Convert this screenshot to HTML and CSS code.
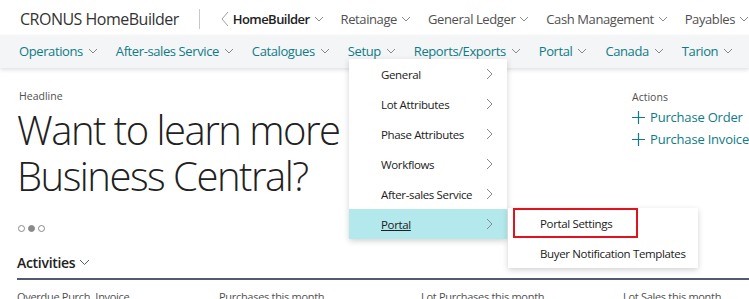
FILE: index.html
```html
<!DOCTYPE html>
<html lang="en">
<head>
    <meta charset="UTF-8">
    <meta name="viewport" content="width=device-width, initial-scale=1.0">
    <title>CRONUS HomeBuilder</title>
    <link rel="stylesheet" href="styles.css">
</head>
<body>
    <header class="top-bar">
        <div class="brand">CRONUS HomeBuilder</div>
        <div class="separator"></div>
        <nav class="role-nav">
            <span class="back">
                <svg width="8" height="16" viewBox="0 0 8 16"><path d="M7 1 L1 8 L7 15" fill="none" stroke="#a0a0a0" stroke-width="1"/></svg>
            </span>
            <a class="role-item current">HomeBuilder<svg class="chev" width="10" height="6" viewBox="0 0 10 6"><path d="M1 1 L5 5 L9 1" fill="none" stroke="#8a8a8a" stroke-width="1"/></svg></a>
            <a class="role-item">Retainage<svg class="chev" width="10" height="6" viewBox="0 0 10 6"><path d="M1 1 L5 5 L9 1" fill="none" stroke="#8a8a8a" stroke-width="1"/></svg></a>
            <a class="role-item">General Ledger<svg class="chev" width="10" height="6" viewBox="0 0 10 6"><path d="M1 1 L5 5 L9 1" fill="none" stroke="#8a8a8a" stroke-width="1"/></svg></a>
            <a class="role-item">Cash Management<svg class="chev" width="10" height="6" viewBox="0 0 10 6"><path d="M1 1 L5 5 L9 1" fill="none" stroke="#8a8a8a" stroke-width="1"/></svg></a>
            <a class="role-item">Payables<svg class="chev" width="10" height="6" viewBox="0 0 10 6"><path d="M1 1 L5 5 L9 1" fill="none" stroke="#8a8a8a" stroke-width="1"/></svg></a>
        </nav>
    </header>

    <nav class="main-nav">
        <a class="nav-item">Operations<svg class="chev" width="10" height="6" viewBox="0 0 10 6"><path d="M1 1 L5 5 L9 1" fill="none" stroke="#8a8a8a" stroke-width="1"/></svg></a>
        <a class="nav-item">After-sales Service<svg class="chev" width="10" height="6" viewBox="0 0 10 6"><path d="M1 1 L5 5 L9 1" fill="none" stroke="#8a8a8a" stroke-width="1"/></svg></a>
        <a class="nav-item">Catalogues<svg class="chev" width="10" height="6" viewBox="0 0 10 6"><path d="M1 1 L5 5 L9 1" fill="none" stroke="#8a8a8a" stroke-width="1"/></svg></a>
        <a class="nav-item">Setup<svg class="chev" width="10" height="6" viewBox="0 0 10 6"><path d="M1 1 L5 5 L9 1" fill="none" stroke="#8a8a8a" stroke-width="1"/></svg></a>
        <a class="nav-item">Reports/Exports<svg class="chev" width="10" height="6" viewBox="0 0 10 6"><path d="M1 1 L5 5 L9 1" fill="none" stroke="#8a8a8a" stroke-width="1"/></svg></a>
        <a class="nav-item">Portal<svg class="chev" width="10" height="6" viewBox="0 0 10 6"><path d="M1 1 L5 5 L9 1" fill="none" stroke="#8a8a8a" stroke-width="1"/></svg></a>
        <a class="nav-item">Canada<svg class="chev" width="10" height="6" viewBox="0 0 10 6"><path d="M1 1 L5 5 L9 1" fill="none" stroke="#8a8a8a" stroke-width="1"/></svg></a>
        <a class="nav-item">Tarion<svg class="chev" width="10" height="6" viewBox="0 0 10 6"><path d="M1 1 L5 5 L9 1" fill="none" stroke="#8a8a8a" stroke-width="1"/></svg></a>
    </nav>

    <main class="content">
        <div class="top-row">
            <section class="headline">
                <div class="caption">Headline</div>
                <h1 class="headline-text">Want to learn more<br>Business Central?</h1>
                <div class="dots">
                    <span class="dot"></span>
                    <span class="dot active"></span>
                    <span class="dot"></span>
                </div>
            </section>
            <section class="actions">
                <div class="caption">Actions</div>
                <a class="action"><svg class="plus" width="13" height="13" viewBox="0 0 13 13"><path d="M6.5 0 V13 M0 6.5 H13" stroke="#0f7b85" stroke-width="1.2"/></svg>Purchase Order</a>
                <a class="action"><svg class="plus" width="13" height="13" viewBox="0 0 13 13"><path d="M6.5 0 V13 M0 6.5 H13" stroke="#0f7b85" stroke-width="1.2"/></svg>Purchase Invoice</a>
            </section>
        </div>

        <section class="activities">
            <h2 class="activities-title">Activities<svg class="chev" width="11" height="7" viewBox="0 0 11 7"><path d="M1 1 L5.5 5.5 L10 1" fill="none" stroke="#505c6d" stroke-width="1"/></svg></h2>
            <div class="cues">
                <div class="cue">Overdue Purch. Invoice</div>
                <div class="cue">Purchases this month</div>
                <div class="cue">Lot Purchases this month</div>
                <div class="cue">Lot Sales this month</div>
            </div>
        </section>
    </main>

    <!-- Setup dropdown -->
    <ul class="menu setup-menu">
        <li class="menu-item">General<svg class="arrow" width="7" height="12" viewBox="0 0 7 12"><path d="M1 1 L6 6 L1 11" fill="none" stroke="#8a8a8a" stroke-width="1"/></svg></li>
        <li class="menu-item">Lot Attributes<svg class="arrow" width="7" height="12" viewBox="0 0 7 12"><path d="M1 1 L6 6 L1 11" fill="none" stroke="#8a8a8a" stroke-width="1"/></svg></li>
        <li class="menu-item">Phase Attributes<svg class="arrow" width="7" height="12" viewBox="0 0 7 12"><path d="M1 1 L6 6 L1 11" fill="none" stroke="#8a8a8a" stroke-width="1"/></svg></li>
        <li class="menu-item">Workflows<svg class="arrow" width="7" height="12" viewBox="0 0 7 12"><path d="M1 1 L6 6 L1 11" fill="none" stroke="#8a8a8a" stroke-width="1"/></svg></li>
        <li class="menu-item">After-sales Service<svg class="arrow" width="7" height="12" viewBox="0 0 7 12"><path d="M1 1 L6 6 L1 11" fill="none" stroke="#8a8a8a" stroke-width="1"/></svg></li>
        <li class="menu-item selected"><span class="underline">Portal</span><svg class="arrow" width="7" height="12" viewBox="0 0 7 12"><path d="M1 1 L6 6 L1 11" fill="none" stroke="#8a8a8a" stroke-width="1"/></svg></li>
    </ul>

    <ul class="menu portal-menu">
        <li class="menu-item highlighted">Portal Settings</li>
        <li class="menu-item">Buyer Notification Templates</li>
    </ul>
</body>
</html>
```

FILE: styles.css
```css
* {
    margin: 0;
    padding: 0;
    box-sizing: border-box;
}

body {
    font-family: 'Open Sans', 'Noto Sans', sans-serif;
    background-color: white;
    color: #212121;
    width: 749px;
    height: 299px;
    overflow: hidden;
    position: relative;
}

a {
    text-decoration: none;
    cursor: pointer;
}

.chev {
    margin-left: 4px;
    flex-shrink: 0;
}

/* top bar */
.top-bar {
    height: 35px;
    display: flex;
    align-items: center;
    padding-left: 20px;
    padding-top: 3px;
    white-space: nowrap;
    overflow: hidden;
}

.brand {
    font-size: 16px;
    color: #333;
    letter-spacing: -0.5px;
}

.separator {
    width: 1px;
    height: 20px;
    background-color: #c8c8c8;
    margin-left: 20px;
}

.role-nav {
    display: flex;
    align-items: center;
    margin-left: 21px;
    gap: 17px;
}

.back {
    display: flex;
    margin-right: -13px;
}

.role-item {
    display: flex;
    align-items: center;
    font-size: 13px;
    color: #505050;
    letter-spacing: -0.4px;
}

.role-item.current {
    font-weight: 600;
    color: #212121;
    letter-spacing: -0.55px;
}

/* navigation bar */
.main-nav {
    height: 33px;
    background-color: #f3f5f7;
    display: flex;
    align-items: center;
    padding-left: 19px;
    padding-bottom: 2px;
    gap: 18px;
    white-space: nowrap;
    box-shadow: 0 2px 4px rgba(0, 0, 0, 0.12);
    position: relative;
    overflow: hidden;
}

.main-nav .nav-item {
    display: flex;
    align-items: center;
    font-size: 13px;
    color: #0f7b85;
    letter-spacing: -0.4px;
}

.main-nav .chev {
    margin-left: 5px;
}

/* content */
.content {
    padding: 21px 0 0 17px;
}

.top-row {
    display: flex;
}

.headline {
    width: 619px;
}

.caption {
    font-size: 10.5px;
    color: #505050;
    padding-left: 2px;
}

.headline-text {
    font-size: 40px;
    font-weight: 300;
    line-height: 46px;
    color: #212121;
    margin-top: 4px;
    letter-spacing: -1.5px;
}

.dots {
    display: flex;
    gap: 3px;
    margin-top: 26px;
    padding-left: 1px;
}

.dot {
    width: 7px;
    height: 7px;
    border: 1px solid #8a8a8a;
    border-radius: 50%;
}

.dot.active {
    background-color: #8a8a8a;
}

.actions .caption {
    padding-left: 0;
    margin-bottom: 2px;
    margin-top: 1px;
}

.action {
    display: flex;
    align-items: center;
    font-size: 13px;
    color: #0f7b85;
    height: 22px;
    white-space: nowrap;
    letter-spacing: -0.2px;
}

.plus {
    margin-right: 5px;
    flex-shrink: 0;
}

.activities {
    margin-top: 21px;
}

.activities-title {
    display: flex;
    align-items: center;
    font-size: 14px;
    font-weight: 600;
    color: #212121;
    letter-spacing: -0.3px;
    padding-bottom: 6px;
    border-bottom: 2px solid #505c6d;
}

.cues {
    display: flex;
    margin-top: 9px;
}

.cue {
    width: 202px;
    flex-shrink: 0;
    font-size: 11px;
    color: #505050;
    letter-spacing: -0.3px;
}

/* dropdown menus */
.menu {
    list-style: none;
    position: absolute;
    background-color: white;
    box-shadow: 0 2px 6px rgba(0, 0, 0, 0.18);
}

.setup-menu {
    left: 349px;
    top: 59px;
    width: 158px;
}

.menu-item {
    height: 30px;
    display: flex;
    align-items: center;
    font-size: 11.5px;
    color: #212121;
    letter-spacing: -0.35px;
    white-space: nowrap;
}

.setup-menu .menu-item {
    justify-content: space-between;
    padding: 0 14px 0 32px;
}

.setup-menu .menu-item.selected {
    background-color: #b3e9ec;
}

.underline {
    text-decoration: underline;
}

.portal-menu {
    left: 508px;
    top: 208px;
    width: 190px;
}

.portal-menu .menu-item {
    padding-left: 32px;
}

.portal-menu .menu-item.highlighted {
    border: 2px solid #e0141e;
    width: 125px;
    margin-left: 5px;
    padding-left: 25px;
}
```
